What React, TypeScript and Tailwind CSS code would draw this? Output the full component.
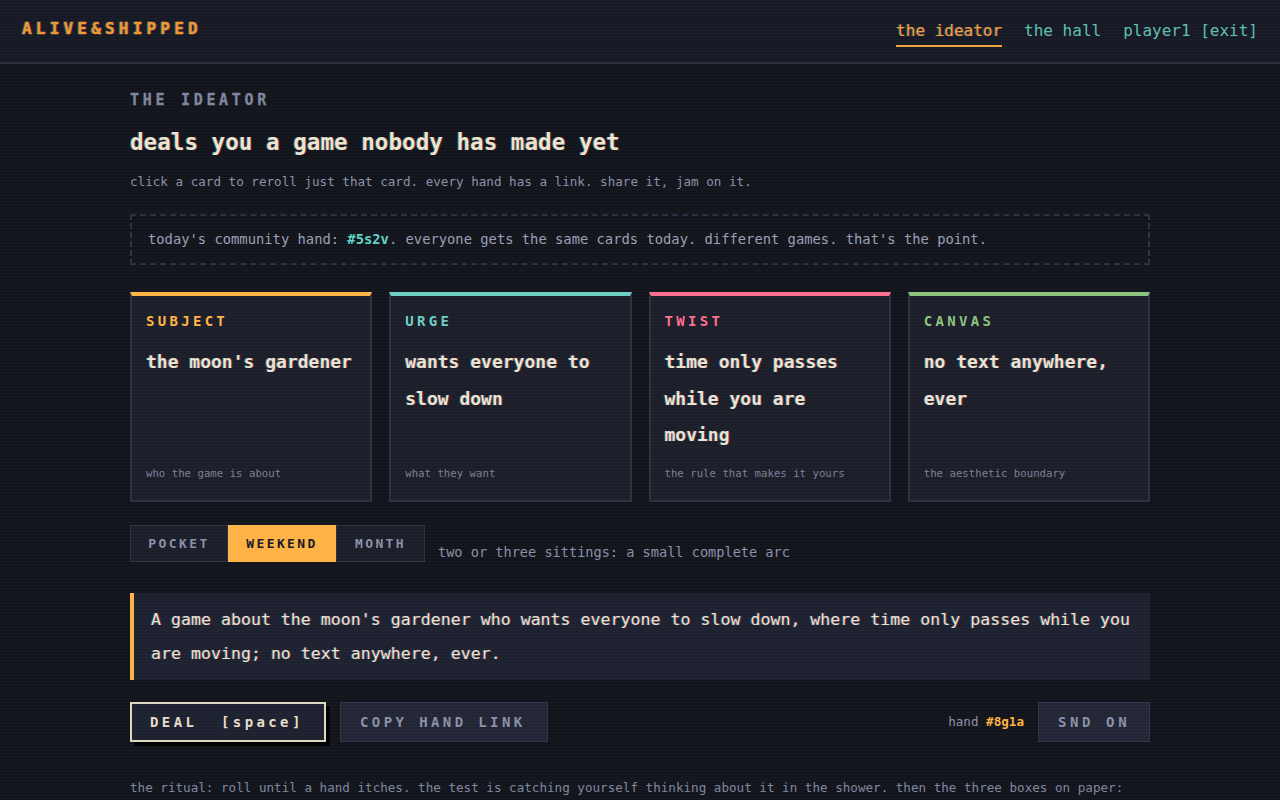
import React from "react";

const mono = "font-['DejaVu_Sans_Mono','Liberation_Mono',monospace]";
const fringe = "[text-shadow:1px_0_rgba(255,40,90,0.35),-1px_0_rgba(0,220,255,0.3)]";

const cards = [
  { label: "SUBJECT", text: "the moon's gardener", hint: "who the game is about", bar: "border-t-[#ffb347]", color: "text-[#ffb347]" },
  { label: "URGE", text: "wants everyone to slow down", hint: "what they want", bar: "border-t-[#6dcfc3]", color: "text-[#6dcfc3]" },
  { label: "TWIST", text: "time only passes while you are moving", hint: "the rule that makes it yours", bar: "border-t-[#ff6f91]", color: "text-[#ff6f91]" },
  { label: "CANVAS", text: "no text anywhere, ever", hint: "the aesthetic boundary", bar: "border-t-[#8cc47f]", color: "text-[#8cc47f]" },
];

export default function App() {
  return (
    <div className={`min-h-screen bg-[#13151c] ${mono} relative overflow-hidden`}>
      <header className="h-[64px] bg-[#171a24] border-b-2 border-[#2a2d3c] flex justify-between px-[22px]">
        <div className={`self-center mb-[4px] text-[16px] font-bold tracking-[4.2px] leading-[20px] text-[#e89a35] [-webkit-text-stroke:0.4px_#e89a35] ${fringe}`}>
          ALIVE&amp;SHIPPED
        </div>
        <nav className="flex gap-[22px] self-start pt-[21px] text-[16px]">
          <span className={`leading-[20px] pb-[4px] border-b-2 border-[#f0a63e] text-[#f0a63e] ${fringe}`}>the ideator</span>
          <span className="leading-[20px] pb-[4px] border-b-2 border-transparent text-[#5fbfb3]">the hall</span>
          <span className="leading-[20px] pb-[4px] border-b-2 border-transparent text-[#5fbfb3]">player1 [exit]</span>
        </nav>
      </header>

      <main className="w-[1020px] mx-auto pt-[28px]">
        <div className="text-[15px] font-bold tracking-[3.7px] leading-[16px] text-[#7f879e] [-webkit-text-stroke:0.3px_#7f879e]">THE IDEATOR</div>
        <h1 className={`mt-[19px] text-[22.6px] font-bold leading-[30px] text-[#ece4cc] ${fringe}`}>
          deals you a game nobody has made yet
        </h1>
        <p className="mt-[16px] text-[12.6px] leading-[18px] text-[#8a91a8]">
          click a card to reroll just that card. every hand has a link. share it, jam on it.
        </p>

        <div className="mt-[23px] h-[51px] border-2 border-dashed border-[#2c3040] flex items-center px-[16px] text-[13.8px] text-[#99a0b6]">
          <span>
            today's community hand: <span className="text-[#5fd3c4] font-bold">#5s2v</span>. everyone gets the same cards today. different games. that's the point.
          </span>
        </div>

        <div className="mt-[27px] grid grid-cols-4 gap-[17px]">
          {cards.map((c) => (
            <div
              key={c.label}
              className={`h-[210px] bg-[#1c1e29] border-2 border-[#2d3041] border-t-4 ${c.bar} flex flex-col px-[14px] pt-[18px] pb-[19px]`}
            >
              <div className={`text-[14px] font-bold tracking-[3.3px] leading-[14px] ${c.color}`}>{c.label}</div>
              <div className={`mt-[16px] text-[18px] font-bold leading-[36.5px] text-[#ece4d0] ${fringe}`}>{c.text}</div>
              <div className="mt-auto text-[10.7px] leading-[14px] text-[#7a8199]">{c.hint}</div>
            </div>
          ))}
        </div>

        <div className="mt-[23px] flex items-end gap-[13px]">
          <div className="flex h-[37px]">
            <div className="w-[98px] flex items-center justify-center bg-[#1c1e2a] border border-[#2e3142] text-[13px] font-bold tracking-[2.4px] text-[#8a91a8]">POCKET</div>
            <div className="w-[108px] flex items-center justify-center bg-[#ffb347] text-[13px] font-bold tracking-[2.4px] text-[#1a1a22]">WEEKEND</div>
            <div className="w-[89px] flex items-center justify-center bg-[#1c1e2a] border border-[#2e3142] text-[13px] font-bold tracking-[2.4px] text-[#8a91a8]">MONTH</div>
          </div>
          <span className="pb-[1px] text-[13.6px] leading-[18px] text-[#8a91a8]">two or three sittings: a small complete arc</span>
        </div>

        <div className="mt-[31px] h-[87px] bg-[#1e2130] border-l-4 border-[#ffb347] pl-[17px] pr-[16px] py-[9.5px] text-[16.6px] leading-[34px] text-[#ece4d0]">
          <span className={fringe}>A game about the moon's gardener who wants everyone to slow down, where time only passes while you are moving; no text anywhere, ever.</span>
        </div>

        <div className="mt-[22px] flex items-center">
          <div className="h-[40px] w-[196px] flex items-center px-[18px] bg-[#1e2130] border-2 border-[#ddd6c0] shadow-[4px_4px_0_#000] text-[14px] font-bold tracking-[3.4px] text-[#e6dec8] whitespace-pre">
            DEAL  [space]
          </div>
          <div className="ml-[14px] h-[40px] w-[208px] flex items-center pl-[19px] bg-[#232636] border border-[#30344a] text-[14px] font-bold tracking-[3.4px] text-[#8a91a8] whitespace-nowrap">
            COPY HAND LINK
          </div>
          <div className="ml-auto flex items-center">
            <span className="text-[12.6px] text-[#8a91a8]">
              hand <span className="text-[#ffb347] font-bold">#8g1a</span>
            </span>
            <div className="ml-[14px] h-[40px] w-[112px] flex items-center pl-[19px] bg-[#232636] border border-[#30344a] text-[14px] font-bold tracking-[3.6px] text-[#8a91a8] whitespace-pre">
              SND ON
            </div>
          </div>
        </div>

        <p className="mt-[37px] text-[12.6px] leading-[18px] text-[#7f879e] whitespace-nowrap">
          the ritual: roll until a hand itches. the test is catching yourself thinking about it in the shower. then the three boxes on paper:
        </p>
      </main>

      <div className="pointer-events-none fixed inset-0 bg-[repeating-linear-gradient(to_bottom,rgba(255,255,255,0.02)_0px,rgba(255,255,255,0.02)_1px,transparent_1px,transparent_3px)]" />
    </div>
  );
}
